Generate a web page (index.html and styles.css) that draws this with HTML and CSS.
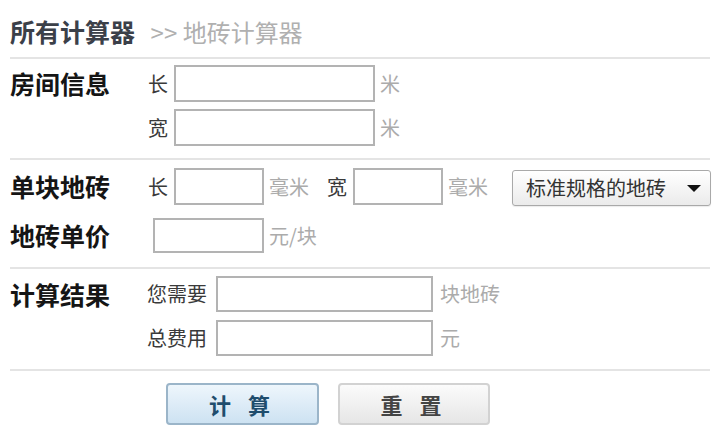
FILE: index.html
```html
<!DOCTYPE html>
<html lang="zh-CN">
<head>
<meta charset="utf-8">
<title>地砖计算器</title>
<link rel="stylesheet" href="styles.css">
</head>
<body>
<div class="calc">
  <div class="head">
    <span class="head-main">所有计算器</span>
    <span class="head-crumb">&gt;&gt; 地砖计算器</span>
  </div>

  <div class="section s1">
    <div class="row">
      <div class="label">房间信息</div>
      <div class="field">
        <span class="lbl">长</span><span class="box w201"></span><span class="unit">米</span>
      </div>
    </div>
    <div class="row">
      <div class="label"></div>
      <div class="field">
        <span class="lbl">宽</span><span class="box w201"></span><span class="unit">米</span>
      </div>
    </div>
  </div>

  <div class="section s2">
    <div class="row">
      <div class="label">单块地砖</div>
      <div class="field">
        <span class="lbl">长</span><span class="box w90"></span><span class="unit">毫米</span>
        <span class="lbl lbl-gap">宽</span><span class="box w90"></span><span class="unit">毫米</span>
        <div class="select">
          <span>标准规格的地砖</span>
          <span class="arrow"></span>
        </div>
      </div>
    </div>
    <div class="row">
      <div class="label">地砖单价</div>
      <div class="field">
        <span class="box w111 price"></span><span class="unit">元/块</span>
      </div>
    </div>
  </div>

  <div class="section s3">
    <div class="row">
      <div class="label">计算结果</div>
      <div class="field">
        <span class="lbl lbl-wide">您需要</span><span class="box w217"></span><span class="unit u-wide">块地砖</span>
      </div>
    </div>
    <div class="row">
      <div class="label"></div>
      <div class="field">
        <span class="lbl lbl-wide">总费用</span><span class="box w217"></span><span class="unit u-wide">元</span>
      </div>
    </div>
  </div>

  <div class="actions">
    <button class="btn btn-calc" type="button">计 算</button>
    <button class="btn btn-reset" type="button">重 置</button>
  </div>
</div>
</body>
</html>
```

FILE: styles.css
```css
* { box-sizing: border-box; }

body {
  margin: 0;
  background: #fff;
  font-family: "Noto Sans CJK SC", "Noto Sans", sans-serif;
  color: #222;
}

.calc {
  width: 710px;
  padding-left: 10px;
}

.head {
  padding-top: 19px;
  padding-bottom: 13px;
  line-height: 25px;
  height: 59px;
  border-bottom: 2px solid #e4e4e4;
  white-space: nowrap;
}

.head-main {
  font-size: 25px;
  font-weight: 700;
  color: #3b4049;
}

.head-crumb {
  font-size: 24px;
  color: #b0b0b0;
  margin-left: 12px;
}

.section {
  border-bottom: 2px solid #e4e4e4;
  display: flex;
  flex-direction: column;
}

.s1 { padding: 6px 0 12px; gap: 7px; }
.s2 { padding: 8px 0 13px; gap: 12px; }
.s3 { padding: 7px 0 13px; gap: 8px; }

.row {
  display: flex;
  align-items: center;
}

.s1 .row, .s2 .row { height: 37px; }
.s3 .row { height: 36px; }

.label {
  width: 137px;
  flex: none;
  font-size: 25px;
  font-weight: 700;
  line-height: 25px;
  color: #151515;
  white-space: nowrap;
}

.field {
  display: flex;
  align-items: center;
  height: 100%;
  font-size: 20px;
  line-height: 20px;
  white-space: nowrap;
}

.lbl {
  color: #3a3a3a;
  margin-left: 1px;
  margin-right: 6px;
}

.lbl-gap { margin-left: 18px; }
.lbl-wide { margin-left: 0; margin-right: 9px; }

.box {
  display: block;
  height: 100%;
  border: 2px solid #b3b3b3;
  background: #fff;
}

.w201 { width: 201px; }
.w90 { width: 90px; }
.w111 { width: 111px; height: 35px; }
.w217 { width: 217px; }
.price { margin-left: 6px; }

.unit {
  color: #ababab;
  margin-left: 5px;
}
.u-wide { margin-left: 7px; }

.select {
  margin-left: 24px;
  width: 199px;
  height: 36px;
  margin-top: 3px;
  border: 1px solid #a9a9a9;
  border-radius: 3px;
  background: linear-gradient(#ffffff, #ebebeb);
  box-shadow: 0 1px 1px rgba(0,0,0,0.08);
  display: flex;
  align-items: center;
  justify-content: space-between;
  padding: 0 9px 0 13px;
  color: #333;
  font-size: 20px;
}

.arrow {
  width: 0;
  height: 0;
  border-left: 7px solid transparent;
  border-right: 7px solid transparent;
  border-top: 7px solid #111;
}

.actions {
  display: flex;
  gap: 19px;
  padding: 12px 0 0 156px;
}

.btn {
  height: 42px;
  border-radius: 4px;
  font-family: "Noto Sans CJK SC", sans-serif;
  font-size: 22px;
  font-weight: 700;
  letter-spacing: 6px;
  line-height: 22px;
  padding: 0;
}

.btn-calc {
  width: 153px;
  border: 2px solid #9bb5c9;
  background: linear-gradient(#eef6fc, #cde2f2);
  color: #1f4d6d;
}

.btn-reset {
  width: 152px;
  border: 2px solid #d2d2d2;
  background: linear-gradient(#fbfbfb, #e6e6e6);
  color: #444;
}
```
